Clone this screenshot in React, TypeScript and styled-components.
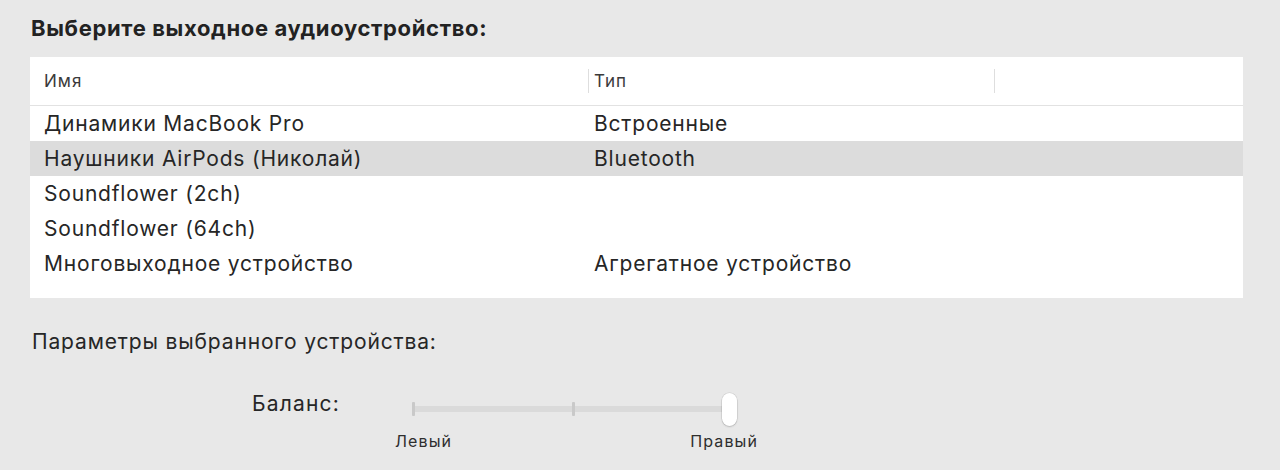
import React from "react";
import styled, { createGlobalStyle } from "styled-components";

const Global = createGlobalStyle`
  html, body { margin: 0; padding: 0; }
  body {
    background: #e8e8e8;
    font-family: Inter, Roboto, "Noto Sans", "Liberation Sans", sans-serif;
    color: #262626;
    -webkit-font-smoothing: antialiased;
  }
`;

const Page = styled.div`
  width: 1280px;
  height: 470px;
  box-sizing: border-box;
  padding: 16px 37px 0 30px;
  display: flex;
  flex-direction: column;
  overflow: hidden;
`;

const Title = styled.h1`
  margin: 0 0 17px 1px;
  font-size: 22px;
  line-height: 24px;
  font-weight: 700;
  letter-spacing: 0.65px;
  color: #222;
`;

const Table = styled.div`
  background: #fff;
  display: flex;
  flex-direction: column;
  padding-bottom: 17px;
`;

const HeaderRow = styled.div`
  display: grid;
  grid-template-columns: 558px 406px 1fr;
  height: 48px;
  border-bottom: 1px solid #e2e2e2;
`;

const HeaderCell = styled.div<{ $divider?: boolean }>`
  position: relative;
  display: flex;
  align-items: center;
  padding-left: ${(p) => (p.$divider ? "6px" : "14px")};
  font-size: 17px;
  letter-spacing: 1px;
  color: #3a3a3a;
  ${(p) =>
    p.$divider &&
    `
    &::before {
      content: "";
      position: absolute;
      left: 0;
      top: 12px;
      bottom: 12px;
      width: 1px;
      background: #dedede;
    }
  `}
`;

const Row = styled.div<{ $selected?: boolean }>`
  display: grid;
  grid-template-columns: 550px 1fr;
  height: 35px;
  align-items: center;
  background: ${(p) => (p.$selected ? "#dcdcdc" : "transparent")};
  font-size: 21px;
  letter-spacing: 0.8px;
  color: #262626;
`;

const Cell = styled.div`
  padding-left: 14px;
  white-space: nowrap;
`;

const Subtitle = styled.div`
  margin: 30px 0 0 2px;
  font-size: 21px;
  line-height: 28px;
  letter-spacing: 0.85px;
  color: #262626;
`;

const BalanceRow = styled.div`
  display: grid;
  grid-template-columns: 310px 346px;
  column-gap: 55px;
  margin-top: 38px;
`;

const BalanceLabel = styled.div`
  text-align: right;
  font-size: 21px;
  line-height: 20px;
  letter-spacing: 1.2px;
  color: #262626;
`;

const SliderWrap = styled.div`
  display: flex;
  flex-direction: column;
`;

const Slider = styled.div`
  position: relative;
  height: 36px;
  margin-left: 17px;
  width: 325px;
`;

const Track = styled.div`
  position: absolute;
  left: 0;
  right: 9px;
  top: 12px;
  height: 6px;
  border-radius: 3px;
  background: #dadada;
`;

const Tick = styled.div<{ $left: number }>`
  position: absolute;
  left: ${(p) => p.$left}px;
  top: 8px;
  width: 3px;
  height: 14px;
  background: #c9c9c9;
  border-radius: 1px;
`;

const Thumb = styled.div`
  position: absolute;
  left: 310px;
  top: -1px;
  width: 15px;
  height: 33px;
  border-radius: 8px;
  background: #fff;
  box-shadow: 0 0 0 0.5px rgba(0, 0, 0, 0.12), 0 1px 2px rgba(0, 0, 0, 0.15);
`;

const SliderLabels = styled.div`
  display: flex;
  justify-content: space-between;
  width: 363px;
  font-size: 16px;
  line-height: 20px;
  letter-spacing: 1.1px;
  margin-top: 1px;
  color: #2e2e2e;
`;

const rows: [string, string][] = [
  ["Динамики MacBook Pro", "Встроенные"],
  ["Наушники AirPods (Николай)", "Bluetooth"],
  ["Soundflower (2ch)", ""],
  ["Soundflower (64ch)", ""],
  ["Многовыходное устройство", "Агрегатное устройство"],
];

export default function App() {
  return (
    <>
      <Global />
      <Page>
        <Title>Выберите выходное аудиоустройство:</Title>
        <Table>
          <HeaderRow>
            <HeaderCell>Имя</HeaderCell>
            <HeaderCell $divider>Тип</HeaderCell>
            <HeaderCell $divider />
          </HeaderRow>
          {rows.map(([name, type], i) => (
            <Row key={name} $selected={i === 1}>
              <Cell>{name}</Cell>
              <Cell>{type}</Cell>
            </Row>
          ))}
        </Table>
        <Subtitle>Параметры выбранного устройства:</Subtitle>
        <BalanceRow>
          <BalanceLabel>Баланс:</BalanceLabel>
          <SliderWrap>
            <Slider>
              <Track />
              <Tick $left={0} />
              <Tick $left={160} />
              <Thumb />
            </Slider>
            <SliderLabels>
              <span>Левый</span>
              <span>Правый</span>
            </SliderLabels>
          </SliderWrap>
        </BalanceRow>
      </Page>
    </>
  );
}
